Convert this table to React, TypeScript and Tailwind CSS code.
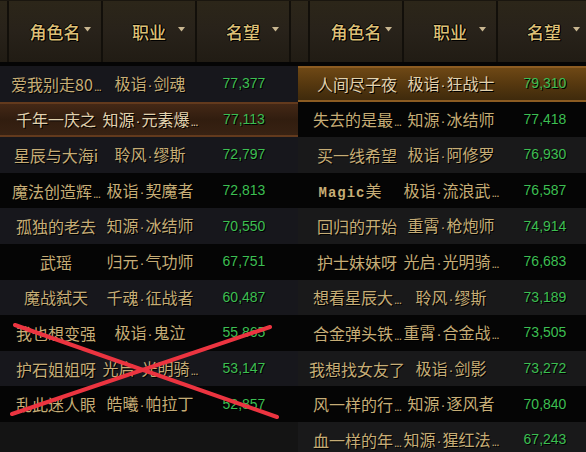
import React from "react";

type Row = { name: React.ReactNode; job: string; fame: string; hl?: boolean };

function T({ s }: { s: string }) {
  const parts = s.split(/(·|…)/);
  return (
    <span className="whitespace-nowrap">
      {parts.map((p, i) =>
        p === "·" ? (
          <span key={i} className="font-['Liberation_Sans',sans-serif] text-[15px] px-[1px]">
            ·
          </span>
        ) : p === "…" ? (
          <span key={i} className="font-['Liberation_Sans',sans-serif] text-[12px] tracking-[-1px] ml-[1px]">
            ...
          </span>
        ) : (
          <span key={i}>{p}</span>
        )
      )}
    </span>
  );
}

const leftRows: Row[] = [
  { name: "爱我别走80…", job: "极诣·剑魂", fame: "77,377" },
  { name: "千年一庆之", job: "知源·元素爆…", fame: "77,113", hl: true },
  { name: "星辰与大海i", job: "聆风·缪斯", fame: "72,797" },
  { name: "魔法创造辉…", job: "极诣·契魔者", fame: "72,813" },
  { name: "孤独的老去", job: "知源·冰结师", fame: "70,550" },
  { name: "武瑶", job: "归元·气功师", fame: "67,751" },
  { name: "魔战弑天", job: "千魂·征战者", fame: "60,487" },
  { name: "我也想变强", job: "极诣·鬼泣", fame: "55,865" },
  { name: "护石姐姐呀", job: "光启·光明骑…", fame: "53,147" },
  { name: "乱此迷人眼", job: "皓曦·帕拉丁", fame: "52,857" },
];

const rightRows: Row[] = [
  { name: "人间尽子夜", job: "极诣·狂战士", fame: "79,310", hl: true },
  { name: "失去的是最…", job: "知源·冰结师", fame: "77,418" },
  { name: "买一线希望", job: "极诣·阿修罗", fame: "76,930" },
  {
    name: (
      <span className="pr-[14px]">
        <span className="font-['Liberation_Mono',monospace] font-bold text-[14px] tracking-[1px]">Magic</span>美
      </span>
    ),
    job: "极诣·流浪武…",
    fame: "76,587",
  },
  { name: "回归的开始", job: "重霄·枪炮师", fame: "74,914" },
  { name: "护士妹妹呀", job: "光启·光明骑…", fame: "76,683" },
  { name: "想看星辰大…", job: "聆风·缪斯", fame: "73,189" },
  { name: "合金弹头铁…", job: "重霄·合金战…", fame: "73,505" },
  { name: "我想找女友了", job: "极诣·剑影", fame: "73,272" },
  { name: "风一样的行…", job: "知源·逐风者", fame: "70,840" },
  { name: "血一样的年…", job: "知源·猩红法…", fame: "67,243" },
];

function Arrow() {
  return (
    <svg width="7" height="5" viewBox="0 0 7 5" className="absolute right-[10px] top-[26px]">
      <polygon points="0,0 7,0 3.5,4.5" fill="#c8b690" />
    </svg>
  );
}

function HeadCell({ label, className = "" }: { label?: string; className?: string }) {
  return (
    <div
      className={
        "relative w-[94px] shrink-0 h-full flex items-center justify-center border-r-2 border-[#120f0a] " +
        className
      }
    >
      {label && (
        <span className="text-[17px] font-medium text-[#dcbf76] [text-shadow:1px_1px_0_#000,-1px_0_0_#000,0_-1px_0_#000,1px_0_0_#000]">
          {label}
        </span>
      )}
      <Arrow />
    </div>
  );
}

function Header({ offset }: { offset: string }) {
  return (
    <div className="h-[62px] flex bg-gradient-to-b from-[#2c2619] via-[#28221a] to-[#211c14] border-t border-[#1a160f] shrink-0">
      <HeadCell className={offset} />
      <HeadCell label="角色名" />
      <HeadCell label="职业" />
      <HeadCell label="名望" />
      <HeadCell />
    </div>
  );
}

function DataRow({ row, i, spacer, leftSide }: { row: Row; i: number; spacer: string; leftSide: boolean }) {
  let bg = i % 2 === 0 ? (leftSide ? "bg-[#17171c]" : "bg-[#19191a]") : "bg-[#050505]";
  if (row.hl) {
    bg = leftSide
      ? "bg-gradient-to-b from-[#442816] via-[#311d0f] to-[#382213] border-y-2 border-[#633a1d]"
      : "bg-gradient-to-b from-[#6e4815] via-[#56380f] to-[#3f2a0c] border-y-2 border-[#8c5c22]";
  }
  const txt = row.hl ? "text-[#e2d2ae]" : "text-[#c6ad76]";
  return (
    <div className={"h-[35.6px] flex items-center shrink-0 " + bg}>
      <div className={spacer + " shrink-0"} />
      <div className={"w-[94px] shrink-0 flex justify-center whitespace-nowrap text-[16px] " + txt}>
        {typeof row.name === "string" ? <T s={row.name} /> : row.name}
      </div>
      <div className={"w-[94px] shrink-0 flex justify-center whitespace-nowrap text-[16px] " + txt}>
        <T s={row.job} />
      </div>
      <div className="w-[94px] shrink-0 flex justify-center whitespace-nowrap text-[14px] text-[#3cbf52] font-['Liberation_Sans',sans-serif]">
        {row.fame}
      </div>
    </div>
  );
}

export default function App() {
  return (
    <div className="w-[586px] h-[452px] bg-black flex overflow-hidden font-['Noto_Sans_CJK_SC','Noto_Sans',sans-serif] [text-shadow:1px_1px_0_#000]">
      <div className="relative w-[298px] h-full overflow-hidden flex flex-col bg-[#141414]">
        <Header offset="ml-[-85px]" />
        <div className="h-[4px] bg-[#050505] shrink-0" />
        {leftRows.map((r, i) => (
          <DataRow key={i} row={r} i={i} spacer="w-[9px]" leftSide />
        ))}
        <svg className="absolute left-0 top-0 pointer-events-none" width="298" height="452">
          <line x1="15" y1="325" x2="277" y2="417" stroke="#ec3440" strokeWidth="4" strokeLinecap="round" />
          <line x1="12" y1="414" x2="270" y2="327" stroke="#ec3440" strokeWidth="4" strokeLinecap="round" />
        </svg>
      </div>
      <div className="relative w-[288px] h-full overflow-hidden flex flex-col bg-[#141414]">
        <Header offset="ml-[-82px]" />
        <div className="h-[4px] bg-[#050505] shrink-0" />
        {rightRows.map((r, i) => (
          <DataRow key={i} row={r} i={i} spacer="w-[12px]" leftSide={false} />
        ))}
      </div>
    </div>
  );
}
